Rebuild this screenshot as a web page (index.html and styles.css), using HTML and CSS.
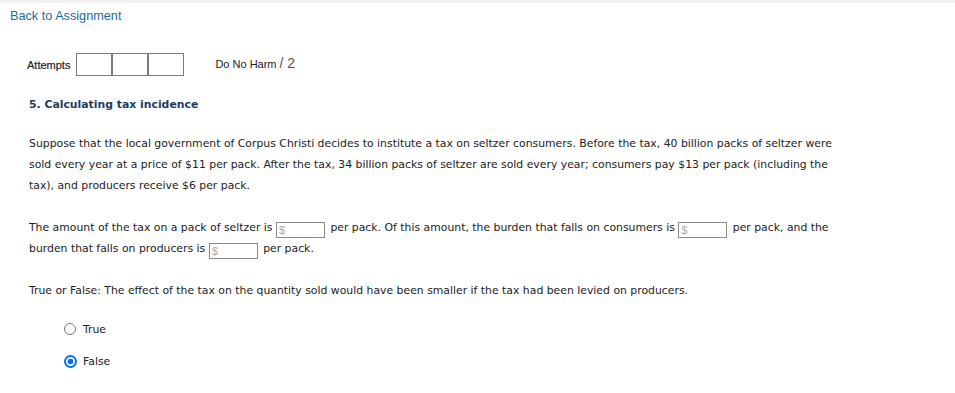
FILE: index.html
```html
<!DOCTYPE html>
<html>
<head>
<meta charset="utf-8">
<link rel="stylesheet" href="styles.css">
</head>
<body>
<div class="topband"></div>
<div class="nav"><a class="back" href="#">Back to Assignment</a></div>
<div class="attempts-row">
  <span class="attempts-label">Attempts</span>
  <div class="boxes"><span class="box"></span><span class="box"></span><span class="box"></span></div>
  <span class="score"><span class="score-label">Do No Harm</span> <span class="score-total">/ 2</span></span>
</div>
<div class="question">
  <h2 class="q-title">5. Calculating tax incidence</h2>
  <p class="para">Suppose that the local government of Corpus Christi decides to institute a tax on seltzer consumers. Before the tax, 40 billion packs of seltzer were sold every year at a price of $11 per pack. After the tax, 34 billion packs of seltzer are sold every year; consumers pay $13 per pack (including the tax), and producers receive $6 per pack.</p>
  <p class="para">The amount of the tax on a pack of seltzer is <span class="money">$</span> per pack. Of this amount, the burden that falls on consumers is <span class="money">$</span> per pack, and the burden that falls on producers is <span class="money">$</span> per pack.</p>
  <p class="para">True or False: The effect of the tax on the quantity sold would have been smaller if the tax had been levied on producers.</p>
  <div class="options">
    <label class="opt"><span class="radio"></span>True</label>
    <label class="opt"><span class="radio checked"></span>False</label>
  </div>
</div>
</body>
</html>
```
FILE: styles.css
```css
html, body { margin: 0; padding: 0; background: #fff; }
body { font-family: "DejaVu Sans", Verdana, sans-serif; font-size: 10.85px; color: #222; }
.topband { height: 3px; background: #eef0f1; }
.nav { padding: 6px 0 0 10px; height: 22px; }
.back { font-family: "Liberation Sans", Arial, sans-serif; font-size: 12.7px; color: #1d6ba3; text-decoration: none; }
.attempts-row { display: flex; align-items: center; margin: 22px 0 0 27px; height: 23px; }
.attempts-label { font-family: "Liberation Sans", Arial, sans-serif; font-size: 11px; color: #222; margin-right: 6px; -webkit-text-stroke: 0.2px #222; }
.boxes { display: flex; }
.box { width: 34px; height: 21px; border: 1px solid #7a7a7a; }
.score { margin-left: 31px; font-family: "Liberation Sans", Arial, sans-serif; color: #222; position: relative; top: -2px; }
.score-label { font-size: 11px; }
.score-total { font-size: 14px; color: #555; }
.question { padding-left: 29px; }
.q-title { font-size: 10.85px; font-weight: bold; color: #1c3c5e; margin: 22px 0 0; line-height: 14px; }
.para { margin: 21px 0 0; line-height: 21px; padding-right: 110px; }
.money { display: inline-block; width: 45px; height: 14px; line-height: 14px; border: 1px solid #8a8a8a; color: #aaa; font-family: "Liberation Sans", Arial, sans-serif; font-size: 11px; padding-left: 2px; vertical-align: -3px; margin: 0 2px 0 0; }
.options { padding-left: 35px; margin-top: 12px; }
.opt { display: flex; align-items: center; height: 32px; font-size: 10.85px; color: #222; }
.radio { width: 12px; height: 12px; border: 1px solid #767676; border-radius: 50%; margin-right: 7px; box-sizing: border-box; }
.radio.checked { width: 13px; height: 13px; margin-right: 6px; border: 2px solid #0a6ff0; background: radial-gradient(circle, #0a6ff0 0 2.6px, #fff 3.2px); }
```
